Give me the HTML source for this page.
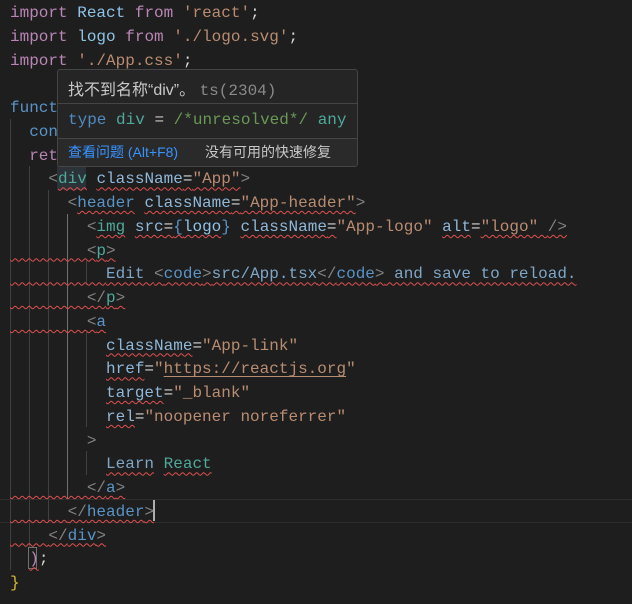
<!DOCTYPE html>
<html><head><meta charset="utf-8">
<style>
html,body{margin:0;padding:0;background:#1e1e1e;width:632px;height:604px;overflow:hidden;}
body{position:relative;font-family:"Liberation Mono",monospace;font-size:16px;}
.l{position:absolute;left:10px;height:23.75px;line-height:23.75px;padding-top:2px;white-space:pre;color:#d4d4d4;}
.k{color:#b985b4}.v{color:#8fc3e6}.s{color:#b98c72}.t{color:#4fa89a}.b{color:#808080}
.h{color:#5a93c6}.a{color:#8fb7d8}.x{color:#7fa6c6}.f{color:#c9c98a}.y{color:#d7ba2d}
.q{text-decoration:underline wavy #e05050;text-decoration-thickness:1px;text-underline-offset:3px;text-decoration-skip-ink:none}
.g{position:absolute;width:1px;background:#404040}
.tip{position:absolute;left:57px;top:69px;width:299px;height:96px;background:#252526;border:1px solid #454545;border-radius:3px;overflow:hidden;font-family:"Liberation Sans","Noto Sans CJK SC",sans-serif;}
.tip .r1{position:absolute;left:10px;top:6px;font-size:16px;color:#c8c8c8;}
.tip .sep{position:absolute;left:0;right:0;height:1px;background:#454545}
.tip .r2{position:absolute;left:10px;top:41px;font-family:"Liberation Mono",monospace;font-size:16px;white-space:pre;}
.tip .r3{position:absolute;left:0;right:0;top:69px;height:27px;background:#2a2a2b;font-size:14px;line-height:27px;}
</style></head><body>
<div class="g" style="left:10px;top:119px;height:451px"></div>
<div class="g" style="left:29px;top:166px;height:381px"></div>
<div class="g" style="left:48px;top:190px;height:333px"></div>
<div class="g" style="left:67px;top:214px;height:285px;background:#707070"></div>
<div class="g" style="left:86px;top:261px;height:24px"></div>
<div class="g" style="left:86px;top:332px;height:95px"></div>
<div class="g" style="left:86px;top:451px;height:24px"></div>
<div style="position:absolute;left:0;top:499px;width:632px;height:22px;border-top:1px solid #2c2c2c;border-bottom:1px solid #2c2c2c"></div>
<div style="position:absolute;left:57px;top:166px;width:29px;height:24px;background:#2b3238"></div>
<div style="position:absolute;left:28px;top:547px;width:9px;height:22px;border:1px solid #707070;box-sizing:border-box"></div>
<div style="position:absolute;left:153px;top:500px;width:2px;height:21px;background:#aeafad"></div>

<div class="l" style="top:0"><span class="k">import</span> <span class="v">React</span> <span class="k">from</span> <span class="s">'react'</span>;</div>
<div class="l" style="top:23.75px"><span class="k">import</span> <span class="v">logo</span> <span class="k">from</span> <span class="s">'./logo.svg'</span>;</div>
<div class="l" style="top:47.5px"><span class="k">import</span> <span class="s">'./App.css'</span>;</div>
<div class="l" style="top:95px"><span class="h">function</span> <span class="f">App</span>() {</div>
<div class="l" style="top:118.75px">  <span class="h">const</span></div>
<div class="l" style="top:142.5px">  <span class="k">return</span> (</div>
<div class="l" style="top:166.25px">    <span class="b">&lt;</span><span class="t q">div</span> <span class="a q">className</span><span class="q">=</span><span class="s q">"App"</span><span class="b">&gt;</span></div>
<div class="l" style="top:190px">      <span class="b">&lt;</span><span class="h q">header</span> <span class="a q">className</span><span class="q">=</span><span class="s q">"App-header"</span><span class="b">&gt;</span></div>
<div class="l" style="top:213.75px">        <span class="b">&lt;</span><span class="t q">img</span> <span class="a q">src</span><span class="q">=</span><span class="h q">{</span><span class="v q">logo</span><span class="h">}</span> <span class="a q">className</span><span class="q">=</span><span class="s">"App-logo"</span> <span class="a q">alt</span>=<span class="s q">"logo" </span><span class="b q">/&gt;</span></div>
<div class="l" style="top:237.5px"><span class="q">        <span class="b">&lt;</span><span class="t">p</span><span class="b">&gt;</span></span></div>
<div class="l" style="top:261.25px"><span class="q">          <span class="x">Edit </span><span class="b">&lt;</span><span class="h">code</span><span class="b">&gt;</span><span class="x">src/App.tsx</span><span class="b">&lt;/</span><span class="h">code</span><span class="b">&gt;</span><span class="x"> and save to reload.</span></span></div>
<div class="l" style="top:285px"><span class="q">        <span class="b">&lt;/</span><span class="t">p</span><span class="b">&gt;</span></span></div>
<div class="l" style="top:308.75px"><span class="q">        <span class="b">&lt;</span><span class="h">a</span></span></div>
<div class="l" style="top:332.5px">          <span class="a q">className</span>=<span class="s">"App-link"</span></div>
<div class="l" style="top:356.25px">          <span class="a q">href</span>=<span class="s">"<span style="text-decoration:underline;text-underline-offset:3px">https://reactjs.org</span>"</span></div>
<div class="l" style="top:380px">          <span class="a q">target</span>=<span class="s">"_blank"</span></div>
<div class="l" style="top:403.75px">          <span class="a q">rel</span>=<span class="s">"noopener noreferrer"</span></div>
<div class="l" style="top:427.5px">        <span class="b">&gt;</span></div>
<div class="l" style="top:451.25px">          <span class="x q">Learn</span> <span class="t q">React</span></div>
<div class="l" style="top:475px"><span class="q">        <span class="b">&lt;/</span><span class="h">a</span><span class="b">&gt;</span></span></div>
<div class="l" style="top:498.75px"><span class="q">      <span class="b">&lt;/</span><span class="h">header</span><span class="b">&gt;</span></span></div>
<div class="l" style="top:522.5px"><span class="q">    <span class="b">&lt;/</span><span class="h">div</span><span class="b">&gt;</span></span></div>
<div class="l" style="top:546.25px">  <span class="k q">)</span>;</div>
<div class="l" style="top:570px"><span class="y">}</span></div>

<div class="tip">
  <div class="r1">找不到名称“div”。 <span style="font-family:'Liberation Mono',monospace;color:#8a8a8a">ts(2304)</span></div>
  <div class="sep" style="top:33px"></div>
  <div class="r2"><span style="color:#4f8ac0">type</span> <span style="color:#4fa89a">div</span> <span style="color:#c8c8c8">=</span> <span style="color:#6a9955">/*unresolved*/</span> <span style="color:#4fa89a">any</span></div>
  <div class="sep" style="top:68px"></div>
  <div class="r3"><span style="position:absolute;left:10px;color:#3794ff">查看问题 (Alt+F8)</span><span style="position:absolute;left:147px;color:#c8c8c8">没有可用的快速修复</span></div>
</div>
</body></html>
